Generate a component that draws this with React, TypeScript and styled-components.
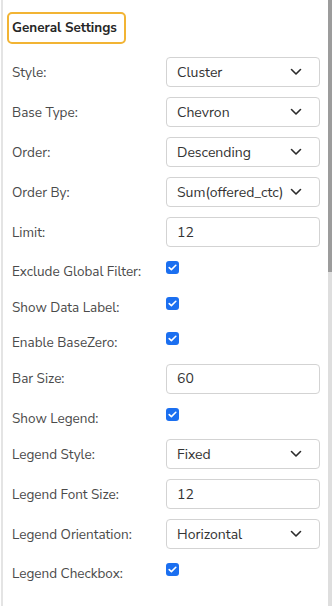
import styled, { createGlobalStyle } from "styled-components";

type Field =
  | { label: string; kind: "select"; value: string }
  | { label: string; kind: "input"; value: string }
  | { label: string; kind: "check" };

const fields: Field[] = [
  { label: "Style:", kind: "select", value: "Cluster" },
  { label: "Base Type:", kind: "select", value: "Chevron" },
  { label: "Order:", kind: "select", value: "Descending" },
  { label: "Order By:", kind: "select", value: "Sum(offered_ctc)" },
  { label: "Limit:", kind: "input", value: "12" },
  { label: "Exclude Global Filter:", kind: "check" },
  { label: "Show Data Label:", kind: "check" },
  { label: "Enable BaseZero:", kind: "check" },
  { label: "Bar Size:", kind: "input", value: "60" },
  { label: "Show Legend:", kind: "check" },
  { label: "Legend Style:", kind: "select", value: "Fixed" },
  { label: "Legend Font Size:", kind: "input", value: "12" },
  { label: "Legend Orientation:", kind: "select", value: "Horizontal" },
  { label: "Legend Checkbox:", kind: "check" },
];

function Chevron() {
  return (
    <svg width="12" height="8" viewBox="0 0 12 8" fill="none">
      <path
        d="M1.5 1.5L6 6L10.5 1.5"
        stroke="#2b2b2b"
        strokeWidth="1.6"
        strokeLinecap="round"
        strokeLinejoin="round"
      />
    </svg>
  );
}

function Check() {
  return (
    <CheckBox>
      <svg width="9" height="7" viewBox="0 0 9 7" fill="none">
        <path
          d="M1.2 3.6L3.4 5.6L7.8 1.3"
          stroke="#fff"
          strokeWidth="1.6"
          strokeLinecap="round"
          strokeLinejoin="round"
        />
      </svg>
    </CheckBox>
  );
}

function App() {
  return (
    <>
      <GlobalStyle />
      <Panel>
        <Content>
          <Title>General Settings</Title>
          <List>
            {fields.map((f) => (
              <Row key={f.label} $check={f.kind === "check"}>
                <Label $check={f.kind === "check"}>{f.label}</Label>
                {f.kind === "select" && (
                  <Box>
                    <span>{f.value}</span>
                    <Chevron />
                  </Box>
                )}
                {f.kind === "input" && (
                  <Box>
                    <span>{f.value}</span>
                  </Box>
                )}
                {f.kind === "check" && <Check />}
              </Row>
            ))}
          </List>
        </Content>
        <ScrollTrack>
          <ScrollThumb />
        </ScrollTrack>
      </Panel>
    </>
  );
}

const GlobalStyle = createGlobalStyle`
  html, body {
    margin: 0;
    padding: 0;
    background: #fff;
    overflow: hidden;
  }
`;

const Panel = styled.div`
  box-sizing: border-box;
  width: 331px;
  height: 606px;
  margin-left: 1px;
  border-left: 2px solid #e4e4e4;
  display: flex;
  overflow: hidden;
  font-family: "Nunito Sans", Lato, "Open Sans", sans-serif;
`;

const Content = styled.div`
  flex: 1;
  padding: 12px 0 0 4px;
`;

const ScrollTrack = styled.div`
  width: 4px;
  height: 100%;
  background: #dedede;
`;

const ScrollThumb = styled.div`
  height: 272px;
  background: #9c9c9c;
`;

const Title = styled.div`
  display: inline-block;
  box-sizing: border-box;
  height: 32px;
  padding: 0 7px 0 3px;
  border: 2px solid #f2b434;
  border-radius: 5px;
  font-size: 13.5px;
  font-weight: 700;
  line-height: 28px;
  color: #262626;
`;

const List = styled.div`
  display: flex;
  flex-direction: column;
  gap: 10px;
  margin-top: 13px;
`;

const Row = styled.div<{ $check: boolean }>`
  display: grid;
  grid-template-columns: 159px 154px;
  align-items: ${(p) => (p.$check ? "start" : "center")};
  height: ${(p) => (p.$check ? "25.5px" : "30px")};
`;

const Label = styled.div<{ $check: boolean }>`
  padding-left: 5px;
  padding-top: ${(p) => (p.$check ? "6px" : "0")};
  font-size: 13.5px;
  line-height: 17px;
  color: #4a4a4a;
  white-space: nowrap;
`;

const Box = styled.div`
  box-sizing: border-box;
  height: 30px;
  display: flex;
  align-items: center;
  justify-content: space-between;
  padding: 0 17px 0 10px;
  border: 1px solid #d3d3d3;
  border-radius: 4px;
  font-size: 14px;
  color: #333;
`;

const CheckBox = styled.div`
  width: 13px;
  height: 13px;
  margin-top: 4px;
  border-radius: 3px;
  background: #1b6ff0;
  display: flex;
  align-items: center;
  justify-content: center;
`;

export default App;
